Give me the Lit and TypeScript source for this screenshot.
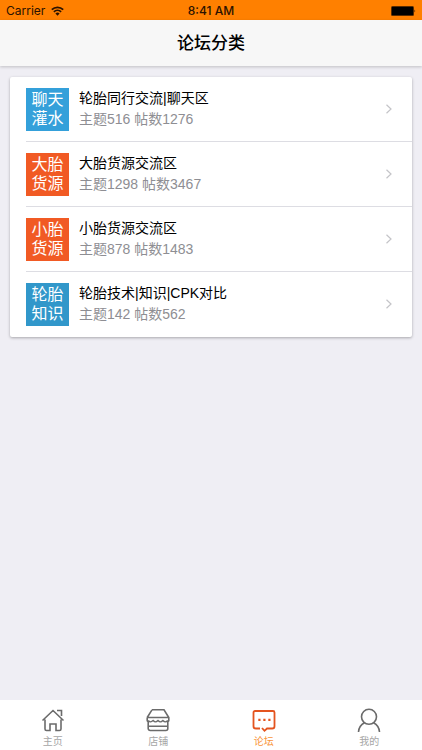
import { LitElement, html, css, svg } from "lit";
import { customElement, property } from "lit/decorators.js";
import { classMap } from "lit/directives/class-map.js";

interface Board {
  badge: [string, string];
  tone: "sky" | "orange" | "blue";
  name: string;
  topics: number;
  posts: number;
}

const BOARDS: Board[] = [
  { badge: ["聊天", "灌水"], tone: "sky", name: "轮胎同行交流|聊天区", topics: 516, posts: 1276 },
  { badge: ["大胎", "货源"], tone: "orange", name: "大胎货源交流区", topics: 1298, posts: 3467 },
  { badge: ["小胎", "货源"], tone: "orange", name: "小胎货源交流区", topics: 878, posts: 1483 },
  { badge: ["轮胎", "知识"], tone: "blue", name: "轮胎技术|知识|CPK对比", topics: 142, posts: 562 },
];

const TABS = [
  {
    label: "主页",
    icon: svg`<path d="M1.500 12.500 12 2.500l10.500 10M4 11.500V21a1.500 1.500 0 0 0 1.500 1.500H9V16h6v6.500h3.500A1.500 1.500 0 0 0 20 21v-9.500M16 2.500h4.500V8"/>`,
  },
  {
    label: "店铺",
    icon: svg`<path d="M6 1.800h12L22.800 9.500v3q0 1-1 1M1.200 9.500 6 1.800M1.200 9.500h21.600M1.200 9.500v3q0 1 1 1M2.200 13V20.500a2 2 0 0 0 2 2h15.600a2 2 0 0 0 2-2V13M2.200 18.200h19.600"/><path d="M2.200 12.500q2.300 2.600 4.900 0q2.400 2.600 4.900 0q2.400 2.600 4.900 0q2.400 2.600 4.900 0" stroke-width="1.300"/>`,
  },
  {
    label: "论坛",
    active: true,
    icon: svg`<path stroke-width="1.800" d="M8 20.500H3.800A2.300 2.300 0 0 1 1.500 18.200V4.500A1.500 1.500 0 0 1 3 3h18a1.500 1.500 0 0 1 1.500 1.500V18.200a2.300 2.300 0 0 1-2.300 2.300H15l-2.500 2.300L10 20"/><path d="M6.300 10.800h2.200v2.200H6.300zM11.300 10.800h2.200v2.200h-2.200zM16.300 10.800h2.200v2.200h-2.200z" fill="currentColor" stroke="none"/>`,
  },
  {
    label: "我的",
    icon: svg`<circle cx="12" cy="8.800" r="7.500"/><path d="M1.500 24C1.800 19.500 4.200 16.500 7.500 14.800M22.500 24c-.3-4.500-2.700-7.500-6-9.200"/>`,
  },
];

@customElement("status-bar")
export class StatusBar extends LitElement {
  static styles = css`
    :host {
      display: grid;
      grid-template-columns: 1fr auto 1fr;
      align-items: center;
      height: 20px;
      padding: 2px 6px 0;
      box-sizing: border-box;
      background: #ff8000;
      color: #2a1200;
      font: 12px/18px Inter, "Liberation Sans", sans-serif;
    }
    .carrier { display: flex; align-items: center; gap: 6px; }
    .time { font-weight: 500; }
    .battery { justify-self: end; }
    svg { display: block; }
  `;
  render() {
    return html`
      <span class="carrier">Carrier
        <svg width="13" height="10" viewBox="0 0 13 10" fill="none" stroke="currentColor" stroke-width="1.800">
          <path d="M.8 3.600a8.200 8.200 0 0 1 11.400 0M2.900 5.900a5.200 5.200 0 0 1 7.200 0" />
          <path d="M6.500 9.800 4.400 7.600a3 3 0 0 1 4.200 0z" fill="currentColor" stroke="none" />
        </svg>
      </span>
      <time class="time">8:41 AM</time>
      <svg class="battery" width="25" height="10" viewBox="0 0 25 10">
        <rect width="23" height="10" rx="1.500" fill="#5a2c00" />
        <rect x="1" y="1" width="21" height="8" fill="#000" />
        <path d="M23.500 3.500q1.500 1.500 0 3z" fill="#2a1200" />
      </svg>
    `;
  }
}

@customElement("board-row")
export class BoardRow extends LitElement {
  @property({ attribute: false }) board!: Board;
  static styles = css`
    :host { display: block; }
    .row {
      display: flex;
      align-items: center;
      gap: 10px;
      height: 64px;
      padding-right: 19px;
      color: #000;
      text-decoration: none;
    }
    .badge {
      display: flex;
      flex-direction: column;
      align-items: center;
      justify-content: center;
      width: 43px;
      height: 43px;
      color: #fff;
      font-size: 16px;
      line-height: 19px;
    }
    .sky { background: #34a0da; }
    .orange { background: #f15a24; }
    .blue { background: #3197ca; }
    .text { flex: 1; min-width: 0; font-size: 14px; line-height: 21px; }
    .name, .stats { display: block; }
    .stats { color: #8e8e93; }
    .arrow { flex: none; fill: none; stroke: #c4c4c8; stroke-width: 1.200; }
  `;
  render() {
    const b = this.board;
    return html`
      <a class="row" href="#">
        <span class=${classMap({ badge: true, [b.tone]: true })} aria-hidden="true">
          <span>${b.badge[0]}</span><span>${b.badge[1]}</span>
        </span>
        <span class="text">
          <span class="name">${b.name}</span>
          <span class="stats">主题${b.topics} 帖数${b.posts}</span>
        </span>
        <svg class="arrow" width="8" height="10" viewBox="0 0 8 10"><path d="M1.500.8 6 5 1.500 9.200" /></svg>
      </a>
    `;
  }
}

@customElement("tab-bar")
export class TabBar extends LitElement {
  static styles = css`
    :host { display: block; background: #fff; }
    nav { display: grid; grid-template-columns: repeat(4, 1fr); height: 50px; }
    .tab {
      display: flex;
      flex-direction: column;
      align-items: center;
      gap: 3px;
      padding-top: 8px;
      color: #a6a6a6;
      font-size: 10px;
      line-height: 14px;
      text-decoration: none;
    }
    .active { color: #f9953b; }
    svg { color: #6b6b6b; fill: none; stroke: currentColor; stroke-width: 1.600; overflow: visible; }
    .active svg { color: #e4541f; }
  `;
  render() {
    return html`<nav>
      ${TABS.map(
        (t) => html`<a class=${classMap({ tab: true, active: !!t.active })} href="#">
          <svg width="24" height="24" viewBox="0 0 24 24" aria-hidden="true">${t.icon}</svg>
          <span>${t.label}</span>
        </a>`
      )}
    </nav>`;
  }
}

@customElement("app-root")
export class AppRoot extends LitElement {
  static styles = css`
    :host {
      display: flex;
      flex-direction: column;
      min-height: 100vh;
      background: #efeef4;
      font-family: "Liberation Sans", "Noto Sans CJK SC", sans-serif;
    }
    header {
      display: flex;
      align-items: center;
      justify-content: center;
      height: 46px;
      background: #f7f7f7;
      box-shadow: 0 1px 3px rgba(0, 0, 0, 0.2);
    }
    h1 { margin: 0; padding-top: 2px; font-size: 17px; font-weight: 500; line-height: 24px; }
    main { flex: 1; padding: 11px 10px; }
    ul {
      margin: 0;
      padding: 0 0 0 16px;
      list-style: none;
      background: #fff;
      border-radius: 2px;
      box-shadow: 0 1px 3px rgba(0, 0, 0, 0.3);
    }
    li { border-bottom: 1px solid #dddde3; }
    li:last-child { border-bottom-color: transparent; }
  `;
  render() {
    return html`
      <status-bar></status-bar>
      <header><h1>论坛分类</h1></header>
      <main>
        <ul>
          ${BOARDS.map((b) => html`<li><board-row .board=${b}></board-row></li>`)}
        </ul>
      </main>
      <tab-bar></tab-bar>
    `;
  }
}
